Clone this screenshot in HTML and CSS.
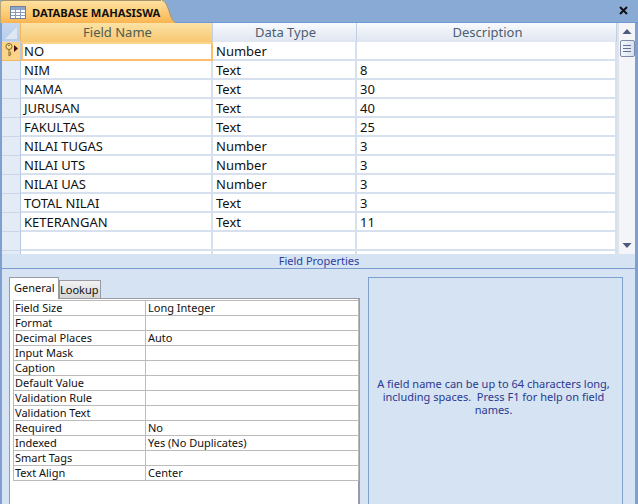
FILE: index.html
```html
<!DOCTYPE html>
<html lang="en">
<head>
<meta charset="utf-8">
<title>Database Mahasiswa</title>
<link rel="stylesheet" href="styles.css">
</head>
<body>
<div class="window">
  <div class="tabbar">
    <div class="doc-tab">
      <svg class="tbl-icon" width="16" height="13" viewBox="0 0 16 13"><rect x=".5" y=".5" width="15" height="12" fill="#fff" stroke="#6f7f9f"/><rect x="1" y="1" width="14" height="3" fill="#8ea5cf"/><path d="M1 6.500h14M1 9.500h14M5.500 1v11M10.500 1v11" stroke="#8b9bbb" fill="none"/></svg>
      <span>DATABASE MAHASISWA</span>
      <svg class="tab-curve" width="15" height="23" viewBox="0 0 15 23"><defs><linearGradient id="tg" x1="0" y1="0" x2="0" y2="1"><stop offset="0" stop-color="#fde0a0"/><stop offset="1" stop-color="#fbb552"/></linearGradient></defs><path d="M0 0H1C4 1 6 5 8 11C10 17 11 21 15 23H0Z" fill="url(#tg)"/><path d="M1 .5C4 1 6 5 8 11C10 17 11 21 15 22.500" fill="none" stroke="#a8966a"/></svg>
    </div>
    <svg class="close" width="9" height="9" viewBox="0 0 9 9"><path d="M1 1L8 8M8 1L1 8" stroke="#111" stroke-width="2"/></svg>
  </div>
  <div class="upper">
    <div class="grid">
      <div class="row head">
        <div class="sel corner"><svg width="18" height="19" viewBox="0 0 18 19"><path d="M15 4V16H3Z" fill="#dfe7f2"/></svg></div>
        <div class="cell c1 active-head">Field Name</div>
        <div class="cell c2">Data Type</div>
        <div class="cell c3">Description</div>
      </div>
      <div class="row current">
        <div class="sel cur-sel">
          <svg width="18" height="18" viewBox="0 0 18 18"><circle cx="7" cy="4.500" r="3" fill="#f6e08e" stroke="#80661f"/><circle cx="7" cy="3.500" r=".8" fill="#80661f"/><path d="M7 7.500v6.500l1.800-1.200v-1.300l-1-.7 1-.8" stroke="#80661f" fill="#f6e08e"/><path d="M12 3l4 3.500-4 3.500Z" fill="#4a1010"/></svg>
        </div>
        <div class="cell c1 focus">NO</div>
        <div class="cell c2">Number</div>
        <div class="cell c3"></div>
      </div>
      <div class="row"><div class="sel"></div><div class="cell c1">NIM</div><div class="cell c2">Text</div><div class="cell c3">8</div></div>
      <div class="row"><div class="sel"></div><div class="cell c1">NAMA</div><div class="cell c2">Text</div><div class="cell c3">30</div></div>
      <div class="row"><div class="sel"></div><div class="cell c1">JURUSAN</div><div class="cell c2">Text</div><div class="cell c3">40</div></div>
      <div class="row"><div class="sel"></div><div class="cell c1">FAKULTAS</div><div class="cell c2">Text</div><div class="cell c3">25</div></div>
      <div class="row"><div class="sel"></div><div class="cell c1">NILAI TUGAS</div><div class="cell c2">Number</div><div class="cell c3">3</div></div>
      <div class="row"><div class="sel"></div><div class="cell c1">NILAI UTS</div><div class="cell c2">Number</div><div class="cell c3">3</div></div>
      <div class="row"><div class="sel"></div><div class="cell c1">NILAI UAS</div><div class="cell c2">Number</div><div class="cell c3">3</div></div>
      <div class="row"><div class="sel"></div><div class="cell c1">TOTAL NILAI</div><div class="cell c2">Text</div><div class="cell c3">3</div></div>
      <div class="row"><div class="sel"></div><div class="cell c1">KETERANGAN</div><div class="cell c2">Text</div><div class="cell c3">11</div></div>
      <div class="row"><div class="sel"></div><div class="cell c1"></div><div class="cell c2"></div><div class="cell c3"></div></div>
      <div class="row stub"><div class="sel"></div><div class="cell c1"></div><div class="cell c2"></div><div class="cell c3"></div></div>
    </div>
    <div class="scroll">
      <svg width="16" height="16" viewBox="0 0 16 16"><path d="M3.500 11L8 6l4.500 5Z" fill="#4d5a80"/></svg>
      <div class="thumb"><svg width="10" height="9" viewBox="0 0 10 9"><path d="M1 1.500h8M1 4.500h8M1 7.500h8" stroke="#66728f" fill="none"/></svg></div>
      <div class="scroll-space"></div>
      <svg width="16" height="16" viewBox="0 0 16 16"><path d="M3.500 5L8 10l4.500-5Z" fill="#4d5a80"/></svg>
    </div>
  </div>
  <div class="fp-title">Field Properties</div>
  <div class="lower">
    <div class="props">
      <div class="tabs">
        <div class="tab on">General</div>
        <div class="tab off">Lookup</div>
      </div>
      <div class="pane">
        <div class="ptable">
          <div class="pk">Field Size</div><div class="pv">Long Integer</div>
          <div class="pk">Format</div><div class="pv"></div>
          <div class="pk">Decimal Places</div><div class="pv">Auto</div>
          <div class="pk">Input Mask</div><div class="pv"></div>
          <div class="pk">Caption</div><div class="pv"></div>
          <div class="pk">Default Value</div><div class="pv"></div>
          <div class="pk">Validation Rule</div><div class="pv"></div>
          <div class="pk">Validation Text</div><div class="pv"></div>
          <div class="pk">Required</div><div class="pv">No</div>
          <div class="pk">Indexed</div><div class="pv">Yes (No Duplicates)</div>
          <div class="pk">Smart Tags</div><div class="pv"></div>
          <div class="pk">Text Align</div><div class="pv">Center</div>
        </div>
      </div>
    </div>
    <div class="help"><span class="help-text">A field name can be up to 64 characters long, including spaces.  Press F1 for help on field names.</span></div>
  </div>
</div>
</body>
</html>
```
FILE: styles.css
```css
* { box-sizing: border-box; }
html, body { margin: 0; padding: 0; }
body { width: 638px; height: 504px; overflow: hidden; font-family: "Noto Sans", sans-serif; background: #d5e3f2; }
.window { width: 638px; height: 504px; display: flex; flex-direction: column; border-left: 2px solid #7e9fcf; border-right: 3px solid #7e9fcf; }
.tabbar { height: 23px; flex: none; background: #8aaad6; border-bottom: 1px solid #6f9ad6; display: flex; justify-content: space-between; align-items: flex-start; margin-left: -2px; margin-right: -3px; }
.doc-tab { height: 23px; width: 161px; padding-left: 9px; position: relative; display: flex; align-items: center; gap: 6px; font-size: 11.2px; font-weight: 700; color: #111; background: linear-gradient(#fde0a0, #fdce78 50%, #fbb552); border-top: 1px solid #a8966a; border-left: 1px solid #b9a878; border-radius: 3px 0 0 0; }
.doc-tab span { white-space: nowrap; }
.tbl-icon { flex: none; }
.tab-curve { position: absolute; right: -15px; top: -1px; }
.close { margin: 6px 10px 0 0; }
.upper { height: 231px; flex: none; display: flex; background: #fff; }
.grid { width: 615px; flex: none; overflow: hidden; }
.row { display: grid; grid-template-columns: 19px 192px 144px 260px; grid-template-rows: 19px; height: 19px; }
.sel { background: #e3ebf6; border-right: 1px solid #b7c7e0; border-bottom: 1px solid #cbd6e8; display: flex; align-items: center; justify-content: center; }
.corner { background: linear-gradient(#c6d8f0, #b7cdea); border-right: 1px solid #f4b860; }
.cur-sel { background: #fbd48a; border-bottom-color: #f4b860; }
.cell { border-right: 2px solid #d6e0ef; border-bottom: 2px solid #d6e0ef; font-size: 13px; line-height: 19px; color: #111; padding-left: 3px; white-space: nowrap; background: #fff; }
.head .cell { text-align: center; color: #4c5d6e; background: linear-gradient(#f8fafd, #dfe6f0); border-bottom: 0; border-right: 1px solid #c2cfe2; padding-left: 2px; line-height: 19px; }
.head .active-head { background: linear-gradient(#fbe2a5, #f8c873); color: #4c5d4e; }
.focus { border: 2px solid #fbbe6e; border-top-color: #fbd48a; padding-left: 1px; line-height: 15px; }
.stub .cell, .stub .sel { border-bottom: 0; }
.scroll { flex: 1; background: #f3f5f9; border-left: 2px solid #dfe3ea; display: flex; flex-direction: column; align-items: center; min-width: 0; }
.thumb { width: 15px; height: 17px; margin-top: 1px; border: 1px solid #7d8aa8; border-radius: 2px; background: linear-gradient(90deg, #f5f8fc, #d7e1ee); display: flex; align-items: center; justify-content: center; flex: none; }
.scroll svg { flex: none; }
.scroll-space { flex: 1; }
.fp-title { height: 15px; flex: none; background: #d5e3f2; border-bottom: 1px solid #7a9ccc; text-align: center; font-size: 11px; line-height: 14px; color: #2c3fa0; padding-left: 1px; }
.lower { flex: 1; display: flex; padding: 8px 13px 0 7px; gap: 8px; min-height: 0; }
.props { width: 351px; flex: none; display: flex; flex-direction: column; }
.tabs { display: flex; height: 21px; align-items: flex-end; flex: none; }
.tab { font-size: 11px; border: 1px solid #9a9aa5; border-bottom: 0; color: #111; }
.tab.on { width: 50px; height: 22px; margin-bottom: -1px; background: #fff; padding: 2px 0 0 4px; position: relative; z-index: 1; }
.tab.off { width: 42px; height: 18px; background: linear-gradient(#f2f2f2, #d6d6d6); line-height: 18px; }
.pane { flex: 1; border: 1px solid #9a9aa5; border-bottom: 0; border-right-width: 2px; background: #fff; padding: 1px 0 0 3px; }
.ptable { display: grid; grid-template-columns: 132px 212px; border: 1px solid #bbb; border-bottom: 0; width: 346px; }
.pk, .pv { height: 15px; border-bottom: 1px solid #bbb; font-size: 11px; line-height: 14px; padding-left: 1px; color: #111; white-space: nowrap; }
.pk { border-right: 1px solid #bbb; }
.pv { padding-left: 2px; }
.help { width: 255px; flex: none; border: 1px solid #7f9fcf; border-bottom: 0; background: #d5e3f2; color: #2b3990; font-size: 11px; line-height: 13px; text-align: center; display: flex; align-items: center; padding: 11px 10px 0 6px; }
.help-text { white-space: pre-wrap; }
```
